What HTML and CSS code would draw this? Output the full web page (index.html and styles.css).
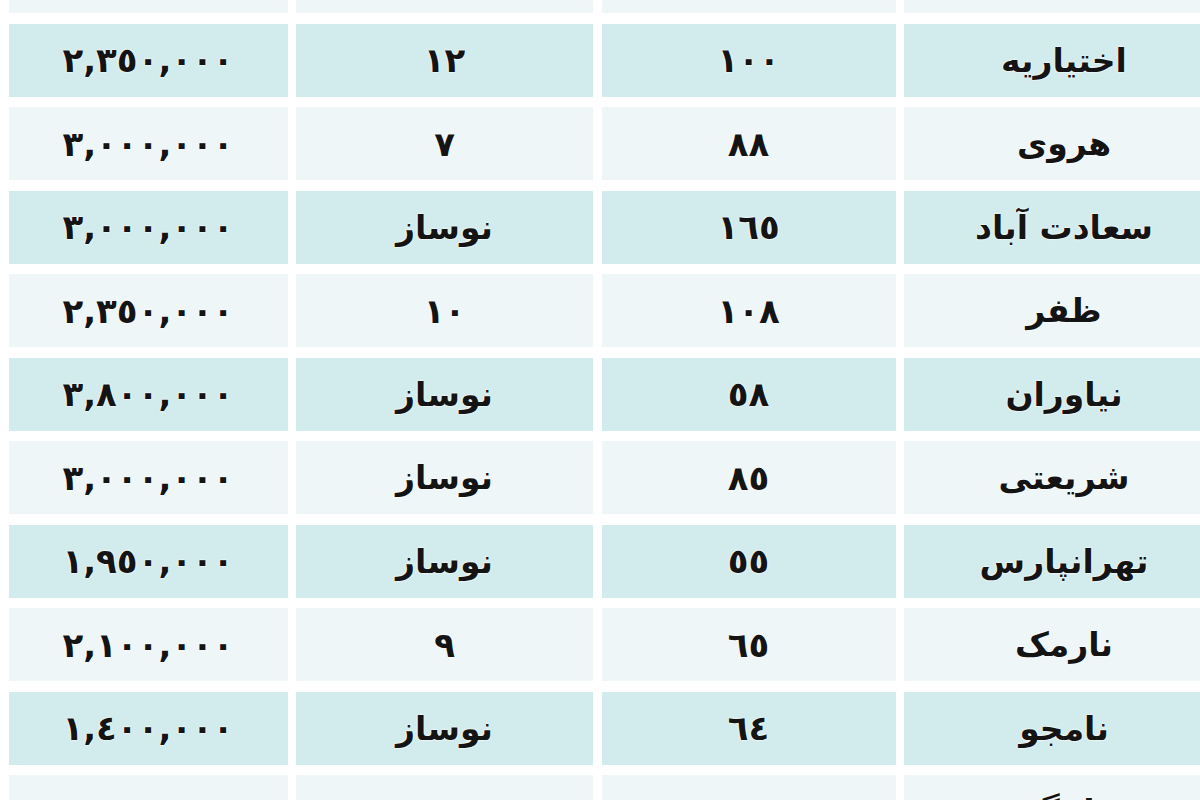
FILE: index.html
```html
<!DOCTYPE html>
<html lang="fa" dir="rtl">
<head>
<meta charset="utf-8">
<title>قیمت آپارتمان</title>
<link rel="stylesheet" href="styles.css">
</head>
<body>
<div class="sheet">
  <div class="row light"><div class="cell word">قیطریه</div><div class="cell">١٢٠</div><div class="cell">٥</div><div class="cell">٢,٨٠٠,٠٠٠</div></div>
  <div class="row blue"><div class="cell word">اختیاریه</div><div class="cell">١٠٠</div><div class="cell">١٢</div><div class="cell">٢,٣٥٠,٠٠٠</div></div>
  <div class="row light"><div class="cell word">هروی</div><div class="cell">٨٨</div><div class="cell">٧</div><div class="cell">٣,٠٠٠,٠٠٠</div></div>
  <div class="row blue"><div class="cell word">سعادت آباد</div><div class="cell">١٦٥</div><div class="cell word">نوساز</div><div class="cell">٣,٠٠٠,٠٠٠</div></div>
  <div class="row light"><div class="cell word">ظفر</div><div class="cell">١٠٨</div><div class="cell">١٠</div><div class="cell">٢,٣٥٠,٠٠٠</div></div>
  <div class="row blue"><div class="cell word">نیاوران</div><div class="cell">٥٨</div><div class="cell word">نوساز</div><div class="cell">٣,٨٠٠,٠٠٠</div></div>
  <div class="row light"><div class="cell word">شریعتی</div><div class="cell">٨٥</div><div class="cell word">نوساز</div><div class="cell">٣,٠٠٠,٠٠٠</div></div>
  <div class="row blue"><div class="cell word">تهرانپارس</div><div class="cell">٥٥</div><div class="cell word">نوساز</div><div class="cell">١,٩٥٠,٠٠٠</div></div>
  <div class="row light"><div class="cell word">نارمک</div><div class="cell">٦٥</div><div class="cell">٩</div><div class="cell">٢,١٠٠,٠٠٠</div></div>
  <div class="row blue"><div class="cell word">نامجو</div><div class="cell">٦٤</div><div class="cell word">نوساز</div><div class="cell">١,٤٠٠,٠٠٠</div></div>
  <div class="row light"><div class="cell word">تاجگر</div><div class="cell">١١٠</div><div class="cell">٣</div><div class="cell">٢,٠٠٠,٠٠٠</div></div>
</div>
</body>
</html>
```
FILE: styles.css
```css
html, body {
  margin: 0;
  padding: 0;
  background: #ffffff;
  overflow: hidden;
  width: 1200px;
  height: 800px;
}
body {
  direction: rtl;
  font-family: "DejaVu Sans", "Noto Sans", sans-serif;
}
.sheet {
  width: 1215px;
  margin-right: -24px;
  margin-top: -60px;
  display: flex;
  flex-direction: column;
  gap: 10.5px;
}
.row {
  display: grid;
  grid-template-columns: 320px 294px 297px 279px;
  column-gap: 8.5px;
  height: 73px;
}
.cell {
  display: flex;
  align-items: center;
  justify-content: center;
  font-size: 34px;
  font-weight: bold;
  color: #141414;
  letter-spacing: 4px;
  text-shadow: 0 0 2px #ffffff, 0 0 2px #ffffff;
}
.cell.word {
  font-size: 33px;
  letter-spacing: 0;
}
.blue .cell {
  background: #d2ebec;
}
.light .cell {
  background: #eef6f7;
}
```
